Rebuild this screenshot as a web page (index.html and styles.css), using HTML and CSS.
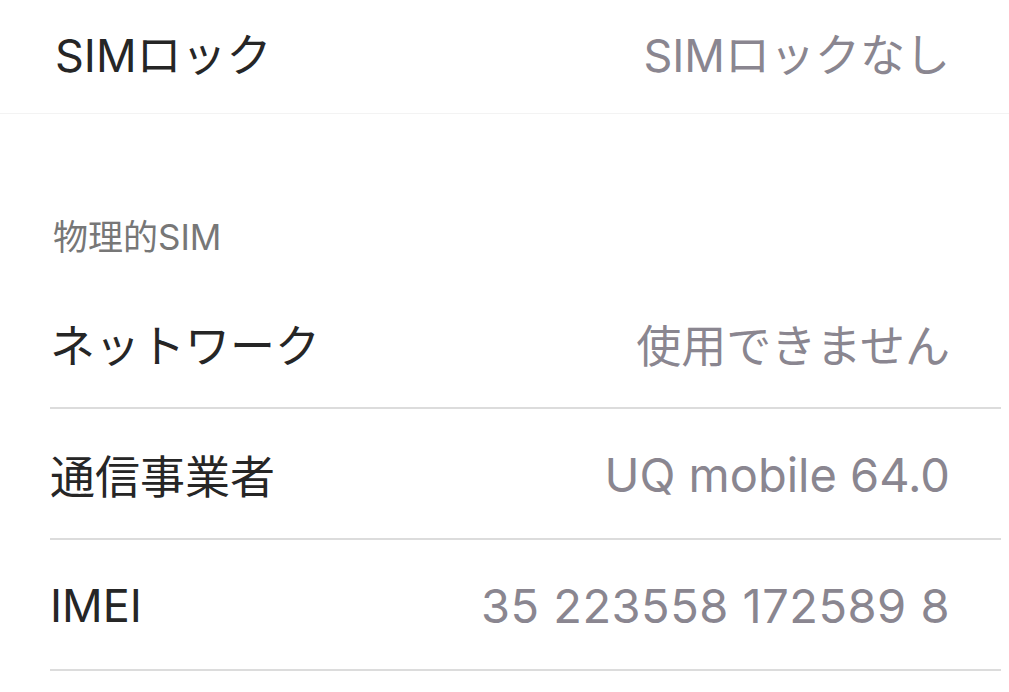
FILE: index.html
```html
<!DOCTYPE html>
<html lang="ja">
<head>
    <meta charset="UTF-8">
    <meta name="viewport" content="width=device-width, initial-scale=1.0">
    <title>SIM情報</title>
    <link rel="stylesheet" href="styles.css">
</head>
<body>
    <div class="group group-top">
        <div class="row row-first">
            <span class="label">SIMロック</span>
            <span class="value">SIMロックなし</span>
        </div>
    </div>

    <div class="section-header">物理的SIM</div>

    <div class="group">
        <div class="row">
            <span class="label">ネットワーク</span>
            <span class="value">使用できません</span>
        </div>
        <div class="row">
            <span class="label">通信事業者</span>
            <span class="value latin">UQ mobile 64.0</span>
        </div>
        <div class="row">
            <span class="label">IMEI</span>
            <span class="value latin digits">35 223558 172589 8</span>
        </div>
    </div>
</body>
</html>
```

FILE: styles.css
```css
body {
    margin: 0;
    padding: 0;
    background-color: #ffffff;
    font-family: Inter, "Noto Sans CJK JP", sans-serif;
    overflow: hidden;
}

.group {
    background: #ffffff;
}

.group-top {
    border-bottom: 1px solid #f3f3f3;
}

.row {
    display: flex;
    justify-content: space-between;
    align-items: center;
    box-sizing: border-box;
    height: 131px;
    padding: 0 59px 0 50px;
    font-size: 45px;
    position: relative;
}

.row::after {
    content: "";
    position: absolute;
    left: 50px;
    right: 8px;
    bottom: 0;
    height: 2px;
    background: #dcdcdc;
}

.row-first {
    height: 113px;
    padding: 0 59px 8px 55px;
}

.row-first::after {
    display: none;
}

.label {
    color: #262626;
}

.value {
    color: #8a8690;
}

/* latin-only values render a touch larger, like the system font */
.value.latin {
    font-size: 47px;
}

.value.digits {
    letter-spacing: 0.5px;
}

.section-header {
    box-sizing: border-box;
    height: 164px;
    display: flex;
    align-items: flex-end;
    padding: 0 0 23px 53px;
    font-size: 35px;
    line-height: 36px;
    color: #777777;
}
```
